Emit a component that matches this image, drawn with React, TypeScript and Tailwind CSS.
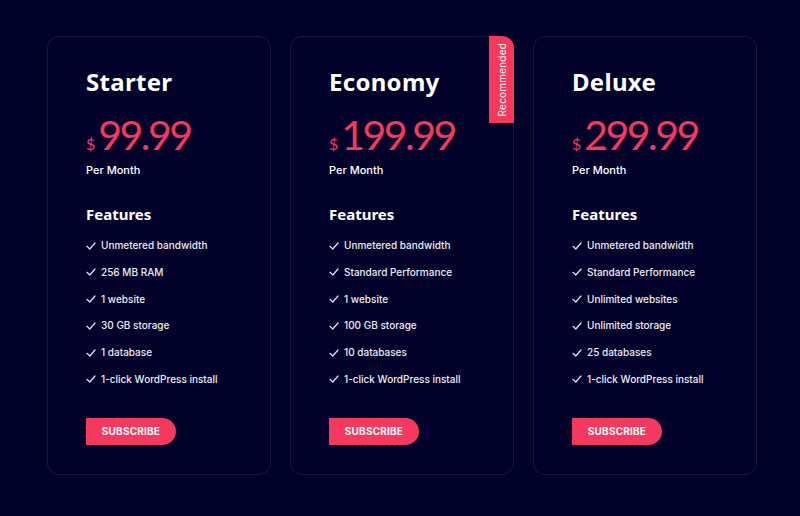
import React from "react";

type Plan = { name: string; price: string; features: string[]; recommended?: boolean };

const plans: Plan[] = [
  {
    name: "Starter",
    price: "99.99",
    features: ["Unmetered bandwidth", "256 MB RAM", "1 website", "30 GB storage", "1 database", "1-click WordPress install"],
  },
  {
    name: "Economy",
    price: "199.99",
    recommended: true,
    features: ["Unmetered bandwidth", "Standard Performance", "1 website", "100 GB storage", "10 databases", "1-click WordPress install"],
  },
  {
    name: "Deluxe",
    price: "299.99",
    features: ["Unmetered bandwidth", "Standard Performance", "Unlimited websites", "Unlimited storage", "25 databases", "1-click WordPress install"],
  },
];

function Check() {
  return (
    <svg width="10" height="10" viewBox="0 0 10 10" fill="none" className="shrink-0">
      <path d="M1 5.3 L3.8 8 L9 2" stroke="#e6e6ee" strokeWidth="1.2" strokeLinecap="round" strokeLinejoin="round" />
    </svg>
  );
}

function Card({ plan }: { plan: Plan }) {
  return (
    <div className="relative w-[224px] h-[439px] rounded-[12px] border border-[#151a45] bg-[#02012a] pl-[38px] pt-[33px]">
      {plan.recommended && (
        <div className="absolute top-[-1px] right-[-1px] w-[25px] h-[87px] bg-[#f4385e] rounded-tr-[12px] flex items-center justify-center">
          <span
            className="text-white text-[10px] leading-none tracking-[0.2px] [writing-mode:vertical-rl] rotate-180"
            style={{ fontFamily: "Inter, sans-serif" }}
          >
            Recommended
          </span>
        </div>
      )}
      <h2 className="text-white text-[24px] font-bold leading-none tracking-[0.3px]" style={{ fontFamily: "'Noto Sans', sans-serif" }}>
        {plan.name}
      </h2>
      <div className="flex items-end mt-[21px] text-[#f4385e]" style={{ fontFamily: "Lato, sans-serif" }}>
        <span className="text-[16px] leading-none mb-[3px] mr-[3px]">$</span>
        <span className="text-[41px] leading-[40px] font-normal tracking-[-2.5px]">{plan.price}</span>
      </div>
      <div className="text-white text-[11px] mt-[10px] leading-none font-medium" style={{ fontFamily: "Inter, sans-serif" }}>
        Per Month
      </div>
      <h3 className="text-white text-[15px] font-bold mt-[31px] leading-none" style={{ fontFamily: "'Noto Sans', sans-serif" }}>
        Features
      </h3>
      <ul className="mt-[17px] flex flex-col gap-[13.8px]" style={{ fontFamily: "Inter, sans-serif" }}>
        {plan.features.map((f) => (
          <li key={f} className="flex items-center gap-[5px] text-[#ececf2] text-[10px] font-medium leading-[13px]">
            <Check />
            <span>{f}</span>
          </li>
        ))}
      </ul>
      <button
        className="mt-[32px] w-[90px] h-[27px] bg-[#f4385e] rounded-r-full text-white text-[10px] font-bold tracking-[0.2px] flex items-center justify-center"
        style={{ fontFamily: "Inter, sans-serif" }}
      >
        SUBSCRIBE
      </button>
    </div>
  );
}

export default function App() {
  return (
    <div className="w-[800px] h-[516px] bg-[#02012a] flex justify-start gap-[19px] pt-[36px] pl-[47px]">
      {plans.map((p) => (
        <Card key={p.name} plan={p} />
      ))}
    </div>
  );
}
